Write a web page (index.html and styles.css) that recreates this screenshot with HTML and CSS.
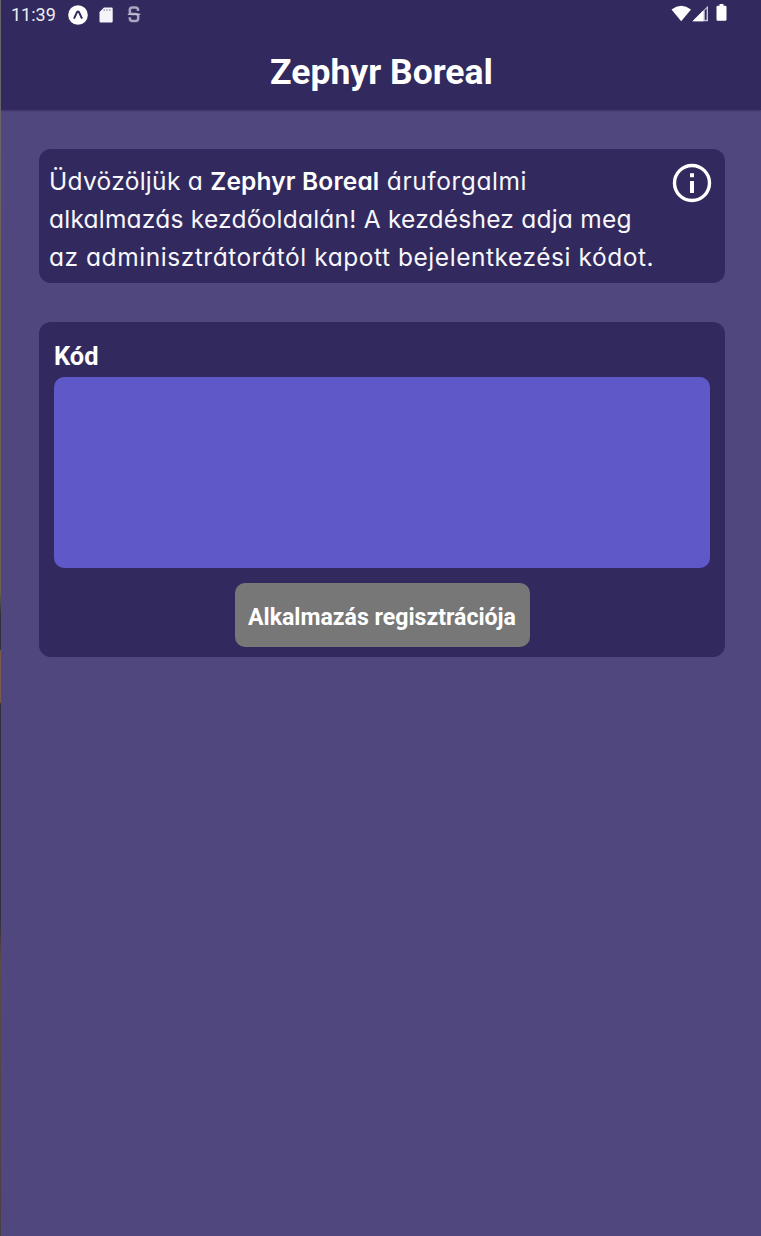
FILE: index.html
```html
<!DOCTYPE html>
<html lang="hu">
<head>
<meta charset="utf-8">
<title>Zephyr Boreal</title>
<link rel="stylesheet" href="styles.css">
</head>
<body>
<div class="screen">
  <header class="header">
    <div class="status">
      <span class="clock">11:39</span>
      <svg class="ic-expo" width="20" height="20" viewBox="0 0 20 20"><circle cx="10" cy="10" r="9.8" fill="#fff"/><path d="M6 13.600 9 7.200Q10 5.800 11 7.200l3 6.400" fill="none" stroke="#322a5e" stroke-width="2"/></svg>
      <svg class="ic-sd" width="14" height="16" viewBox="0 0 14 16"><path d="M5 .5h7.500a1.200 1.200 0 0 1 1.200 1.200v12.600a1.200 1.200 0 0 1-1.200 1.200H1.700a1.200 1.200 0 0 1-1.200-1.200V5z" fill="#f4f3f8"/><path d="M5.200 2v2M8 2v2M10.800 2v2" stroke="#a09bb8" stroke-width="1.200"/></svg>
      <svg class="ic-s" width="14" height="17" viewBox="0 0 14 17"><path d="M11 5V4Q11 1.500 8.500 1.500h-3Q2.800 1.500 2.800 4v1.700Q2.800 8 5 8h3.500q2.700 0 2.700 2.500v1.700q0 2.800-2.800 2.800H5.600q-2.800 0-2.800-2.800v-1" fill="none" stroke="#aaa5c0" stroke-width="2.500"/><path d="M.8 8.300h12.400" stroke="#c5c1d4" stroke-width="1.300"/></svg>
      <svg class="ic-system" width="58" height="20" viewBox="0 0 58 20"><path d="M.5 5.500Q10.200-1.800 20 5.500L10.200 17.300z" fill="#fff"/><path d="M21.500 17.300 37 1.800v15.500z" fill="#c5c1d4"/><path d="M21.500 17.300 32.500 6.300v11z" fill="#fff"/><path d="M33.800 6.500 35.600 4.500v11.300h-1.800z" fill="#322a5e"/><path d="M48.500 0h4v1.800h1.800q1.200 0 1.200 1.200v12.500q0 1.200-1.200 1.200h-7.600q-1.200 0-1.200-1.200V3q0-1.200 1.200-1.200h1.800z" fill="#fff"/></svg>
    </div>
    <h1 class="title">Zephyr Boreal</h1>
  </header>
  <main class="content">
    <section class="card intro">
      <p class="intro-text">
        <span class="line line-a"><span class="greeting">Üdvözöljük a </span><b class="brand">Zephyr Boreal</b> áruforgalmi</span>
        <span class="line line-b">alkalmazás kezdőoldalán! A kezdéshez adja meg</span>
        <span class="line line-c">az adminisztrátorától kapott bejelentkezési kódot.</span>
      </p>
      <svg class="ic-info" width="40" height="40" viewBox="0 0 40 40"><circle cx="20" cy="20" r="17.500" fill="none" stroke="#fff" stroke-width="3.400"/><path d="M18 10.300h4v4h-4zM18 18h4v12h-4z" fill="#fff"/></svg>
    </section>
    <section class="card form">
      <label class="label" for="code">Kód</label>
      <input class="code" id="code" type="text">
      <button class="submit" type="button">Alkalmazás regisztrációja</button>
    </section>
  </main>
</div>
</body>
</html>
```
FILE: styles.css
```css
* { box-sizing: border-box; }
body { margin: 0; background: linear-gradient(#6a6368 0, #6a6368 110px, #6b6250 300px, #6b6250 590px, #33303a 615px, #33303a 649px, #7a5a48 651px, #7a5a48 702px, #33303a 704px, #33303a 920px, #5c4a44 960px, #48403f 1236px); font-family: Roboto, "Liberation Sans", sans-serif; color: #fff; }
.screen { height: 1236px; margin-left: 1px; background: #51477f; overflow: hidden; }
.header { height: 110px; background: #322a5e; box-shadow: 0 1px 2px rgba(40, 32, 80, .45); }
.status { display: flex; height: 30px; padding-left: 10px; align-items: flex-start; }
.clock { width: 57px; padding-top: 4px; font-size: 18px; line-height: 21px; color: #edecf3; }
.ic-expo { margin-top: 5px; }
.ic-sd { margin: 7px 0 0 11px; }
.ic-s { margin: 6px 0 0 14px; }
.ic-system { margin: 4px 32px 0 auto; }
.title { margin: 20px 0 0; padding-left: 1px; font-size: 35.5px; line-height: 44px; font-weight: 700; text-align: center; }
.content { padding: 39px 36px 0 38px; }
.card { background: #322a5e; border-radius: 12px; }
.intro { display: flex; justify-content: space-between; height: 134px; padding: 13px 13px 0 10px; }
.intro-text { margin: 0; font-family: Inter, Lato, sans-serif; font-size: 24.5px; line-height: 38px; font-feature-settings: "cv11"; color: #f8f7fb; }
.line { display: block; white-space: nowrap; }
.line-a { letter-spacing: .57px; }
.greeting { letter-spacing: .3px; }
.brand { font-weight: 600; letter-spacing: .15px; color: #fff; }
.line-b { letter-spacing: .23px; }
.line-c { letter-spacing: .55px; }
.ic-info { flex: none; margin-top: 1px; }
.form { display: flex; flex-direction: column; align-items: center; height: 335px; margin-top: 38.5px; padding: 19.5px 15px 0; }
.label { align-self: flex-start; height: 36px; font-size: 25.4px; line-height: 30px; font-weight: 700; }
.code { width: 100%; height: 190.5px; padding: 12px; border: 0; border-radius: 10px; background: #5f58c9; color: #fff; font: 24px Roboto, sans-serif; }
.submit { width: 295px; height: 63.5px; margin-top: 15.5px; padding: 5px 0 0; border: 0; border-radius: 10px; background: #777; color: #fff; font: 700 23.1px Roboto, sans-serif; white-space: nowrap; }
```
